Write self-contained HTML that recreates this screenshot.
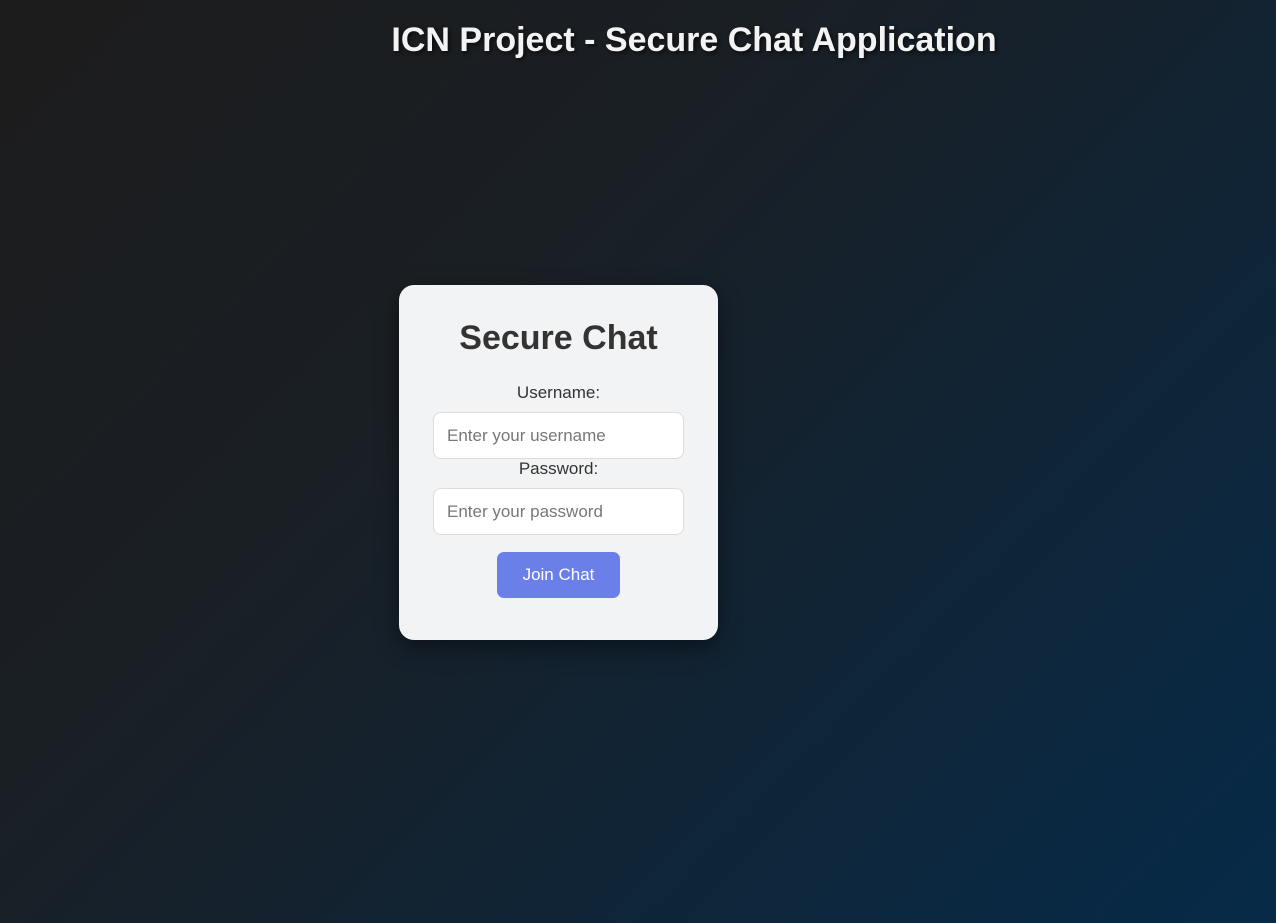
<!DOCTYPE html>
<html><head><meta charset="utf-8"><style>
html,body{margin:0;height:100%}
body{width:1276px;height:923px;overflow:hidden;background:linear-gradient(135deg,#1c1c1c 0%,#1a1f24 35%,#0f2538 70%,#062a48 100%);font-family:"Liberation Sans",sans-serif;position:relative}
h1{position:absolute;left:0;width:1388px;top:21px;margin:0;text-align:center;color:#f3f3f3;font-size:34px;font-weight:bold;text-shadow:2px 2px 4px rgba(0,0,0,.6)}
.card{position:absolute;left:399px;top:285px;width:319px;height:355px;background:#f2f3f4;border-radius:15px;box-shadow:0 8px 24px rgba(0,0,0,.45);text-align:center}
.t{position:absolute;left:0;width:100%;color:#333}
.in{position:absolute;left:34px;height:45px;background:#fff;border:1px solid #dcdcdc;border-radius:8px;color:#777;font-size:17px;line-height:45px;text-align:left;padding-left:13px;box-sizing:content-box}
.btn{position:absolute;left:98px;top:267px;width:123px;height:46px;background:#6a80e8;border-radius:7px;color:#fff;font-size:17px;line-height:46px}
</style></head><body>
<h1>ICN Project - Secure Chat Application</h1>
<div class="card">
<div class="t" style="top:34px;font-size:34px;font-weight:bold">Secure Chat</div>
<div class="t" style="top:98px;font-size:17px">Username:</div>
<div class="in" style="top:127px;width:236px">Enter your username</div>
<div class="t" style="top:174px;font-size:17px">Password:</div>
<div class="in" style="top:203px;width:236px">Enter your password</div>
<div class="btn">Join Chat</div>
</div>
</body></html>
